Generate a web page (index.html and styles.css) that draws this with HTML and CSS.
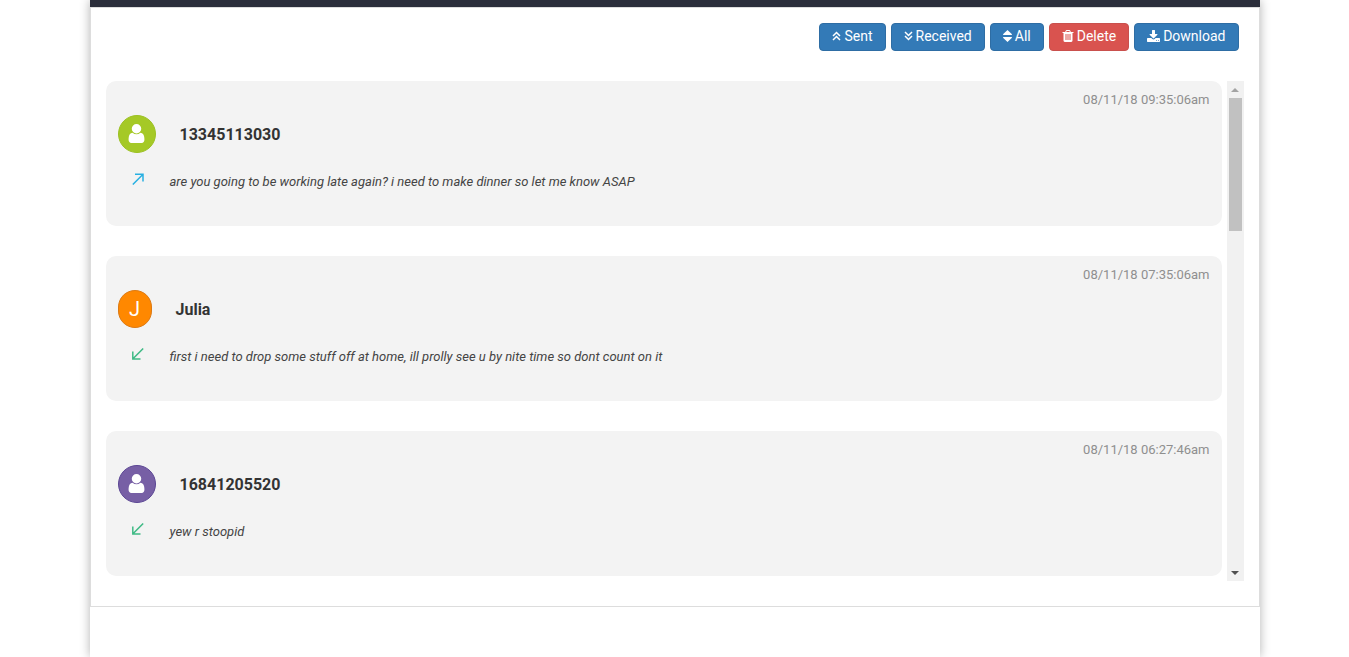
FILE: index.html
```html
<!DOCTYPE html>
<html lang="en">
<head>
    <meta charset="UTF-8">
    <meta name="viewport" content="width=device-width, initial-scale=1.0">
    <title>Messages</title>
    <link rel="stylesheet" href="styles.css">
</head>
<body>
    <!-- shared icons -->
    <svg class="icon-defs" aria-hidden="true">
        <symbol id="icon-user" viewBox="256 128 1280 1536">
            <path d="M1536 1399q0 109-62.500 187t-150.500 78h-854q-88 0-150.500-78t-62.500-187q0-85 8.500-160.500t31.500-152 58.500-131 94-89 134.500-34.500q131 128 313 128t313-128q76 0 134.500 34.500t94 89 58.500 131 31.500 152 8.500 160.500zm-256-887q0 159-112.500 271.500t-271.500 112.500-271.500-112.500-112.500-271.500 112.500-271.500 271.500-112.500 271.500 112.500 112.500 271.500z"/>
        </symbol>
        <symbol id="icon-sent" viewBox="0 0 12 12">
            <path d="M.8 11.500L10.800 1.500M3 1.200H11V8.500"/>
        </symbol>
        <symbol id="icon-received" viewBox="0 0 12 12">
            <path d="M11.200 0.500L1.200 10.500M0.800 3.500V11H8.500"/>
        </symbol>
    </svg>

    <div class="container">
        <div class="topbar"></div>
        <div class="panel">
            <div class="toolbar">
                <button type="button" class="btn">
                    <svg class="line" width="9" height="10" viewBox="0 0 9 10"><path d="M1 5L4.500 1.500L8 5M1 9L4.500 5.500L8 9"/></svg>
                    Sent
                </button>
                <button type="button" class="btn">
                    <svg class="line" width="9" height="10" viewBox="0 0 9 10"><path d="M1 1L4.500 4.500L8 1M1 5L4.500 8.500L8 5"/></svg>
                    Received
                </button>
                <button type="button" class="btn">
                    <svg width="9" height="12" viewBox="0 0 9 12"><path d="M4.500 0L9 4.200Q9 5 8.500 5H.5Q0 5 0 4.200ZM4.500 12L9 7.800Q9 7 8.500 7H.5Q0 7 0 7.800Z"/></svg>
                    All
                </button>
                <button type="button" class="btn btn-danger">
                    <svg width="12" height="12" viewBox="192 128 1408 1536"><path d="M704 1376v-704q0-14-9-23t-23-9h-64q-14 0-23 9t-9 23v704q0 14 9 23t23 9h64q14 0 23-9t9-23zm256 0v-704q0-14-9-23t-23-9h-64q-14 0-23 9t-9 23v704q0 14 9 23t23 9h64q14 0 23-9t9-23zm256 0v-704q0-14-9-23t-23-9h-64q-14 0-23 9t-9 23v704q0 14 9 23t23 9h64q14 0 23-9t9-23zm-544-992h448l-48-117q-7-9-17-11h-317q-10 2-17 11zm928 32v64q0 14-9 23t-23 9h-96v948q0 83-47 143.500t-113 60.500h-832q-66 0-113-58.500t-47-141.500v-952h-96q-14 0-23-9t-9-23v-64q0-14 9-23t23-9h309l70-167q15-37 54-63t79-26h320q40 0 79 26t54 63l70 167h309q14 0 23 9t9 23z"/></svg>
                    Delete
                </button>
                <button type="button" class="btn">
                    <svg width="13" height="12" viewBox="64 0 1664 1536"><path d="M1344 1344q0-26-19-45t-45-19-45 19-19 45 19 45 45 19 45-19 19-45zm256 0q0-26-19-45t-45-19-45 19-19 45 19 45 45 19 45-19 19-45zm128-224v320q0 40-28 68t-68 28h-1472q-40 0-68-28t-28-68v-320q0-40 28-68t68-28h465l135 136q58 56 136 56t136-56l136-136h464q40 0 68 28t28 68zm-325-569q17 41-14 70l-448 448q-18 19-45 19t-45-19l-448-448q-31-29-14-70 17-39 59-39h256v-448q0-26 19-45t45-19h256q26 0 45 19t19 45v448h256q42 0 59 39z"/></svg>
                    Download
                </button>
            </div>

            <div class="scroll-area">
                <div class="messages">
                    <div class="message">
                        <div class="time">08/11/18 09:35:06am</div>
                        <div class="contact">
                            <span class="avatar green"><svg><use href="#icon-user"/></svg></span>
                            <span class="name">13345113030</span>
                        </div>
                        <div class="text">
                            <svg class="sent"><use href="#icon-sent"/></svg>
                            <p>are you going to be working late again? i need to make dinner so let me know ASAP</p>
                        </div>
                    </div>

                    <div class="message">
                        <div class="time">08/11/18 07:35:06am</div>
                        <div class="contact">
                            <span class="avatar letter orange">J</span>
                            <span class="name">Julia</span>
                        </div>
                        <div class="text">
                            <svg class="received"><use href="#icon-received"/></svg>
                            <p>first i need to drop some stuff off at home, ill prolly see u by nite time so dont count on it</p>
                        </div>
                    </div>

                    <div class="message">
                        <div class="time">08/11/18 06:27:46am</div>
                        <div class="contact">
                            <span class="avatar purple"><svg><use href="#icon-user"/></svg></span>
                            <span class="name">16841205520</span>
                        </div>
                        <div class="text">
                            <svg class="received"><use href="#icon-received"/></svg>
                            <p>yew r stoopid</p>
                        </div>
                    </div>
                </div>

                <div class="scrollbar">
                    <span class="arrow up"></span>
                    <div class="track"><div class="thumb"></div></div>
                    <span class="arrow down"></span>
                </div>
            </div>
        </div>
    </div>
</body>
</html>
```
FILE: styles.css
```css
* {
    box-sizing: border-box;
}

body {
    margin: 0;
    background: #fff;
    color: #333;
    font-family: Roboto, "Liberation Sans", sans-serif;
    font-size: 14px;
    line-height: 20px;
}

.icon-defs {
    display: none;
}

.container {
    max-width: 1170px;
    min-height: 100vh;
    margin: 0 auto;
    background: #fff;
    box-shadow: 0 0 10px rgba(0, 0, 0, 0.3);
}

.topbar {
    height: 7px;
    background: #2b2e3b;
}

.panel {
    padding: 15px 15px 25px;
    border: 1px solid #ddd;
}

/* Filter and action buttons */
.toolbar {
    display: flex;
    flex-wrap: wrap;
    justify-content: flex-end;
    gap: 5px;
    margin-bottom: 30px;
    padding-right: 5px;
}

.btn {
    display: flex;
    align-items: center;
    gap: 3px;
    height: 28px;
    padding: 0 12px 2px;
    border: 1px solid #2e6da4;
    border-radius: 4px;
    background: #337ab7;
    color: #fff;
    font-family: inherit;
    font-size: 14px;
    line-height: 20px;
    cursor: pointer;
}

.btn:hover {
    background: #286090;
}

.btn-danger {
    border-color: #c9504d;
    background: #d9534f;
}

.btn-danger:hover {
    background: #c9302c;
}

.btn svg {
    fill: #fff;
}

.btn svg.line {
    fill: none;
    stroke: #fff;
    stroke-width: 1.5;
}

/* Message list */
.scroll-area {
    display: flex;
    gap: 5px;
    height: 500px;
}

.messages {
    flex: 1;
    min-width: 0;
    overflow: hidden;
}

.message {
    height: 145px;
    margin-bottom: 30px;
    padding: 9px 12px;
    border-radius: 10px;
    background: #f3f3f3;
}

.time {
    color: #8f8f8f;
    font-size: 13px;
    text-align: right;
}

.contact {
    display: flex;
    align-items: center;
    gap: 24px;
    margin-top: 5px;
}

.avatar {
    display: flex;
    align-items: center;
    justify-content: center;
    width: 38px;
    height: 38px;
    border: 1px solid transparent;
    border-radius: 50%;
    color: #fff;
    font-size: 20px;
}

.avatar.letter {
    width: 34px;
    border-radius: 17px;
}

.avatar svg {
    width: 17px;
    height: 19px;
    margin-bottom: 1px;
    fill: #fff;
}

.green {
    border-color: #9cc122;
    background: #a5c926;
}

.orange {
    border-color: #dc7a14;
    background: #ff8800;
}

.purple {
    border-color: #5b4694;
    background: #775fa5;
}

.name {
    padding-top: 2px;
    font-size: 16px;
    font-weight: 700;
}

.text {
    display: flex;
    align-items: flex-start;
    margin-top: 19px;
    padding-left: 14px;
}

.text svg {
    flex: none;
    width: 12px;
    height: 12px;
    margin: 1px 26px 0 0;
    fill: none;
    stroke-width: 1.5;
}

.sent {
    stroke: #28b0e2;
}

.received {
    stroke: #3fba85;
}

.text p {
    margin: 0;
    color: #444;
    font-size: 13px;
    font-style: italic;
}

/* Scrollbar */
.scrollbar {
    display: flex;
    flex-direction: column;
    width: 17px;
    background: #f1f1f1;
}

.arrow {
    display: flex;
    align-items: center;
    justify-content: center;
    height: 17px;
}

.arrow::before {
    content: "";
    border: 4px solid transparent;
}

.up::before {
    border-top: 0;
    border-bottom-color: #a3a3a3;
}

.down::before {
    border-bottom: 0;
    border-top-color: #505050;
}

.track {
    flex: 1;
    padding: 0 2px;
}

.thumb {
    height: 133px;
    background: #c1c1c1;
}
```
